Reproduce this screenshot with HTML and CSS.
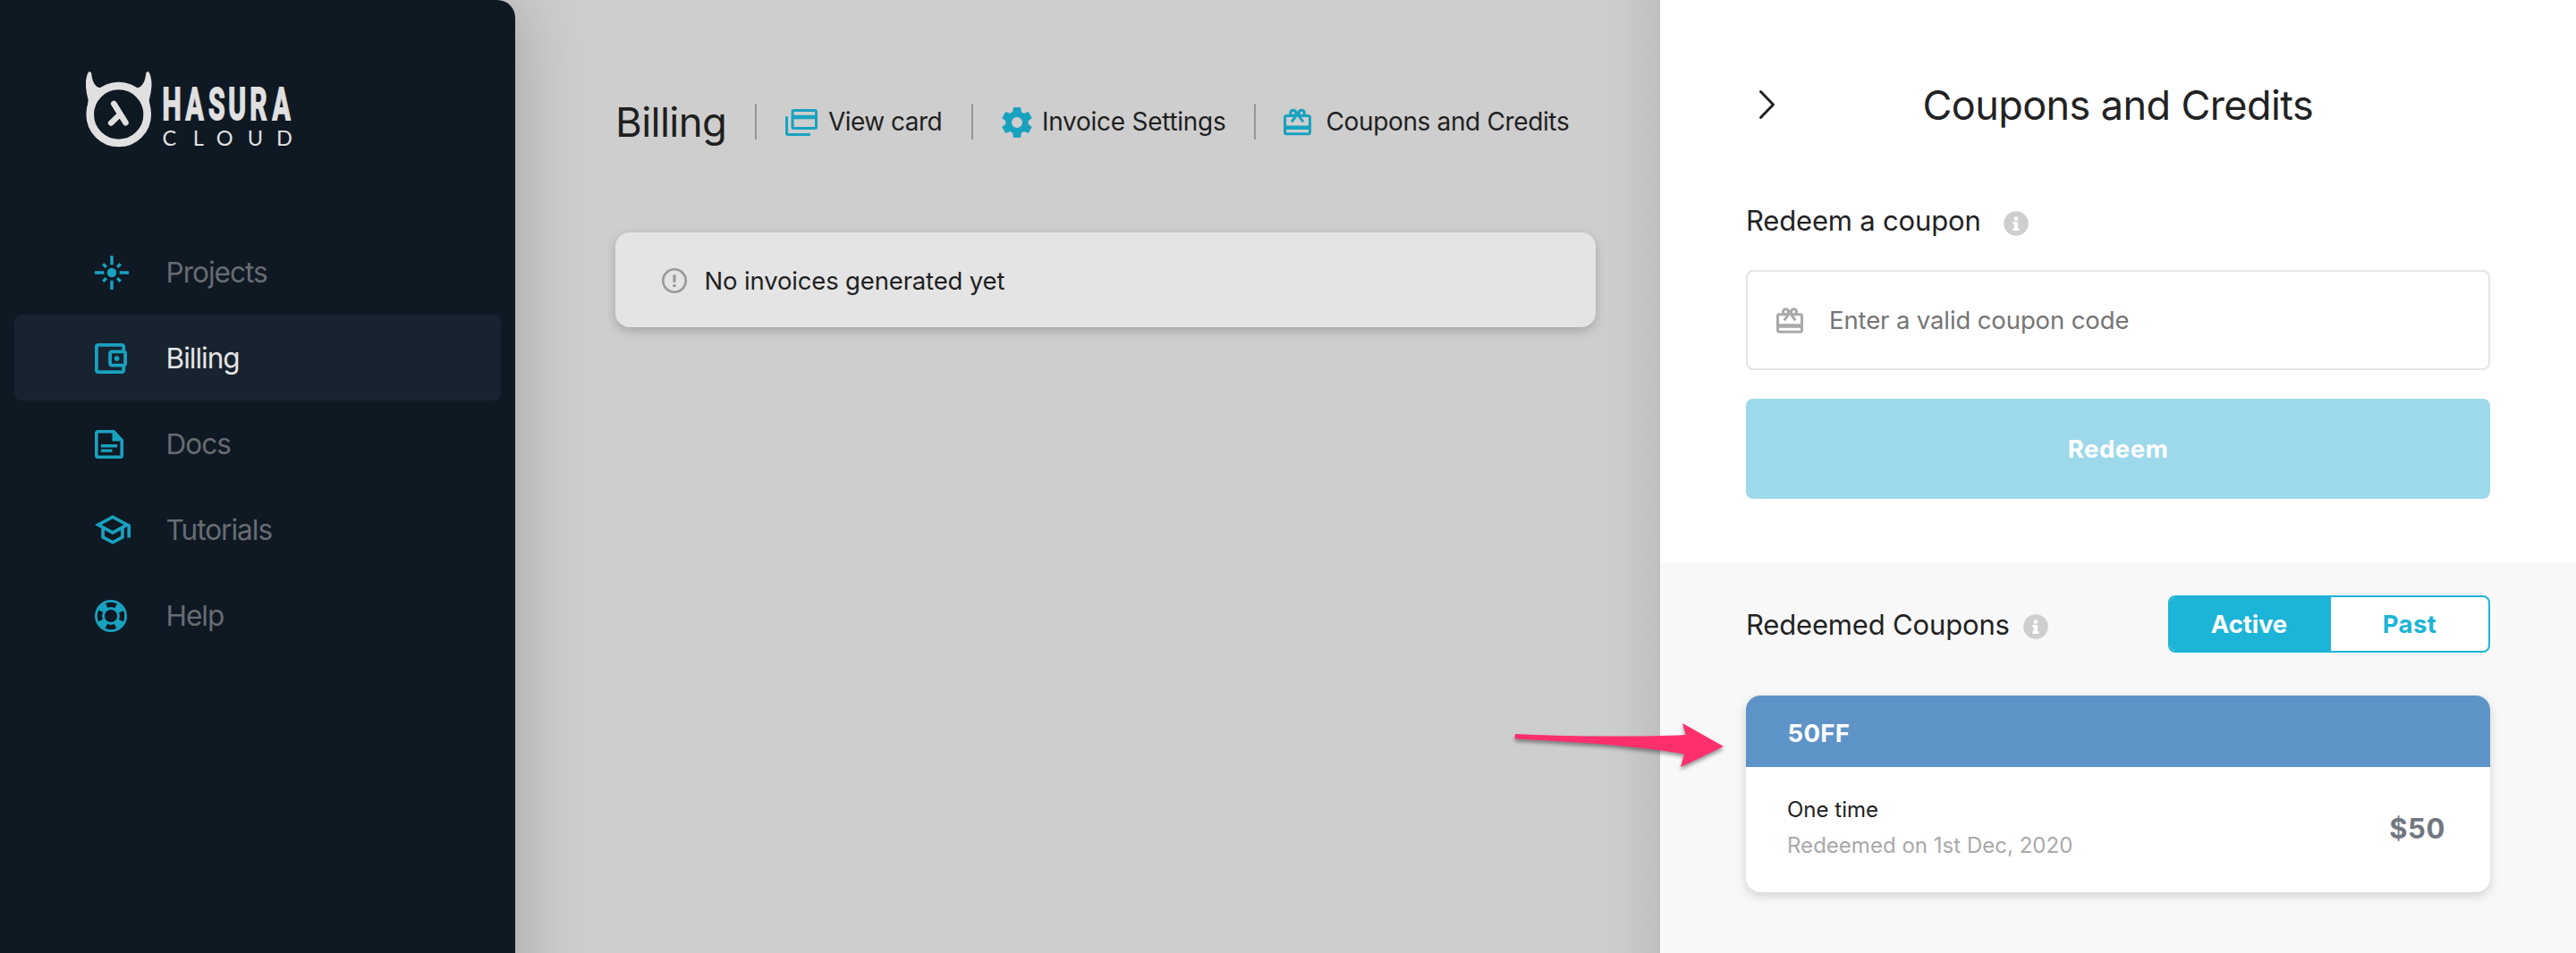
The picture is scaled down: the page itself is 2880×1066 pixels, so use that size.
FILE: index.html
```
<!DOCTYPE html>
<html lang="en">
<head>
<meta charset="utf-8">
<title>Hasura Cloud - Billing</title>
<link rel="stylesheet" href="styles.css">
</head>
<body>
<svg class="defs" aria-hidden="true">
  <symbol id="gift" viewBox="2 2 20 19"><path d="M20 6h-2.18c.11-.31.18-.65.18-1 0-1.66-1.34-3-3-3-1.05 0-1.96.54-2.5 1.35l-.5.67-.5-.68C10.96 2.54 10.05 2 9 2 7.34 2 6 3.34 6 5c0 .35.07.69.18 1H4c-1.11 0-1.99.89-1.99 2L2 19c0 1.11.89 2 2 2h16c1.11 0 2-.89 2-2V8c0-1.11-.89-2-2-2zm-5-2c.55 0 1 .45 1 1s-.45 1-1 1-1-.45-1-1 .45-1 1-1zM9 4c.55 0 1 .45 1 1s-.45 1-1 1-1-.45-1-1 .45-1 1-1zm11 15H4v-2h16v2zm0-5H4V8h5.08L7 10.83 8.62 12 11 8.76l1-1.36 1 1.36L15.38 12 17 10.83 14.92 8H20v6z"/></symbol>
  <symbol id="info" viewBox="0 0 28 28"><circle cx="14" cy="14" r="13.8"/><path class="info-mark" d="M11.8 6.6h4.1v3.8h-4.1zM10.3 12h5.7v7.3h1.5v2.6h-7.2v-2.6h1.5v-4.700h-1.500z"/></symbol>
</svg>
<div class="app">
  <aside class="sidebar">
    <div class="logo">
      <svg width="240" height="88" viewBox="0 0 240 88">
        <circle cx="36.700" cy="48" r="32" fill="none" stroke="currentColor" stroke-width="8.700"/>
        <path d="M4 0C1 1-1 13 .2 19C.8 25 1.800 28 2.700 32L1.500 40L10 30L20 17C17 18.500 14.500 18.500 12.500 17C8 13.500 7 8 6.300 3C6 .8 5 0 4 0z"/>
        <path d="M69.400 0C72.400 1 74.400 13 73.200 19C72.600 25 71.600 28 70.700 32L71.900 40L63.400 30L53.400 17C56.400 18.500 58.900 18.500 60.900 17C65.400 13.500 66.400 8 67.100 3C67.400 .8 68.400 0 69.400 0z"/>
        <path d="M31.300 36L44.500 57.300M37.500 48.500L28.200 57.500" fill="none" stroke="currentColor" stroke-width="6.600" stroke-linecap="round"/>
        <text class="logo-name" transform="scale(.6 1)" x="142.500 186 228.500 265.500 305.500 347.500" y="54">HASURA</text>
        <text class="logo-sub" x="85.500 119.800 145.700 180.800 213" y="83">CLOUD</text>
      </svg>
    </div>
    <nav class="nav">
      <a class="nav-item"><span class="nav-icon"><svg width="38" height="38" viewBox="1 1 22 22"><path d="M7 11H1v2h6v-2zm2.170-3.240L7.050 5.640 5.640 7.050l2.120 2.120 1.410-1.410zM13 1h-2v6h2V1zm5.360 6.050l-1.410-1.410-2.120 2.120 1.410 1.410 2.120-2.120zM17 11v2h6v-2h-6zm-5-2c-1.660 0-3 1.340-3 3s1.340 3 3 3 3-1.340 3-3-1.340-3-3-3zm2.830 7.240l2.120 2.120 1.410-1.410-2.120-2.120-1.410 1.410zm-9.190.71l1.410 1.410 2.120-2.120-1.410-1.410-2.120 2.120zM11 23h2v-6h-2v6z"/></svg></span><span class="nav-text">Projects</span></a>
      <a class="nav-item active"><span class="nav-icon"><svg width="36" height="34" viewBox="3 3 19 18" preserveAspectRatio="none"><path d="M21 7.280V5c0-1.100-.9-2-2-2H5c-1.110 0-2 .9-2 2v14c0 1.100.89 2 2 2h14c1.100 0 2-.9 2-2v-2.280c.59-.35 1-.98 1-1.720V9c0-.74-.41-1.370-1-1.720zM20 9v6h-7V9h7zM5 19V5h14v2h-6c-1.100 0-2 .9-2 2v6c0 1.100.9 2 2 2h6v2H5z"/><circle cx="16" cy="12" r="1.500"/></svg></span><span class="nav-text">Billing</span></a>
      <a class="nav-item"><span class="nav-icon"><svg width="32" height="32" viewBox="0 0 32 32"><path fill-rule="evenodd" d="M3.500 0H22L32 11V28.500A3.500 3.500 0 0 1 28.500 32H3.500A3.500 3.500 0 0 1 0 28.500V3.500A3.500 3.500 0 0 1 3.500 0zM3.600 3.400V28.600H28.400V12.400H19.500V3.400zM7 16H25v3.400H7zM7 21.400H19.500v3.400H7z"/></svg></span><span class="nav-text">Docs</span></a>
      <a class="nav-item"><span class="nav-icon"><svg width="40" height="33" viewBox="1 3 22 18"><path d="M12 3L1 9l4 2.180v6L12 21l7-3.820v-6l2-1.090V17h2V9L12 3zm6.820 6L12 12.720 5.180 9 12 5.280 18.820 9zM17 15.990l-5 2.730-5-2.730v-3.720L12 15l5-2.730v3.720z"/></svg></span><span class="nav-text">Tutorials</span></a>
      <a class="nav-item"><span class="nav-icon"><svg class="ring" width="36" height="36" viewBox="0 0 36 36"><circle cx="18" cy="18" r="16.600" stroke-width="2.800"/><circle cx="18" cy="18" r="8.500" stroke-width="2.800"/><circle cx="18" cy="18" r="12.500" stroke-width="6.400" stroke-dasharray="9 10.635" stroke-dashoffset="-5.320"/></svg></span><span class="nav-text">Help</span></a>
    </nav>
  </aside>

  <main class="main">
    <header class="toolbar">
      <h1 class="title">Billing</h1>
      <a class="tool view"><svg width="36" height="30" viewBox="0 0 36 30"><path fill-rule="evenodd" d="M9.500 0H33A3 3 0 0 1 36 3V20A3 3 0 0 1 33 23H9.500A3 3 0 0 1 6.500 20V3A3 3 0 0 1 9.500 0zM9.600 3V6.800H33V3zM9.600 11.200V20H33V11.200zM0 8.200H3.100V27H28V30H3A3 3 0 0 1 0 27z"/></svg><span>View card</span></a>
      <a class="tool invoice"><svg width="34" height="34" viewBox="2 2 20 20"><path d="M19.430 12.980c.04-.32.070-.64.070-.98s-.03-.66-.070-.98l2.110-1.650c.19-.15.240-.42.120-.64l-2-3.460c-.12-.22-.39-.3-.61-.22l-2.490 1c-.52-.4-1.080-.73-1.690-.98l-.38-2.650C14.460 2.180 14.250 2 14 2h-4c-.25 0-.46.180-.49.420l-.38 2.650c-.61.250-1.170.59-1.690.98l-2.490-1c-.23-.09-.49 0-.61.220l-2 3.460c-.13.220-.070.490.120.640l2.110 1.650c-.04.320-.070.650-.070.980s.03.660.070.980l-2.110 1.650c-.19.150-.24.420-.12.640l2 3.460c.12.220.39.300.61.220l2.490-1c.52.400 1.080.730 1.690.980l.38 2.650c.03.240.24.420.49.420h4c.25 0 .46-.18.490-.42l.38-2.650c.61-.25 1.170-.59 1.690-.98l2.490 1c.23.090.49 0 .61-.22l2-3.460c.12-.22.070-.49-.12-.64l-2.110-1.650zM12 15.500c-1.930 0-3.500-1.570-3.500-3.500s1.570-3.500 3.500-3.500 3.500 1.570 3.500 3.500-1.570 3.500-3.500 3.500z"/></svg><span>Invoice Settings</span></a>
      <a class="tool coupons"><svg width="31" height="31"><use href="#gift"/></svg><span>Coupons and Credits</span></a>
    </header>
    <section class="empty">
      <svg width="28" height="28" viewBox="0 0 28 28"><circle cx="14" cy="14" r="12.700" fill="none" stroke="currentColor" stroke-width="2.600"/><path d="M12.400 7.200h3.200v8.600h-3.200zM12.400 18h3.200v3h-3.200z"/></svg>
      <span>No invoices generated yet</span>
    </section>
  </main>

  <aside class="panel">
    <section class="redeem">
      <header class="panel-head">
        <svg class="chevron" width="20" height="34" viewBox="0 0 20 34"><path d="M2.500 2.500L16.500 17L2.500 31.500"/></svg>
        <h2 class="panel-title">Coupons and Credits</h2>
      </header>
      <div class="label label-redeem"><span>Redeem a coupon</span><svg width="28" height="28"><use href="#info"/></svg></div>
      <div class="field"><svg width="30" height="29"><use href="#gift"/></svg><span>Enter a valid coupon code</span></div>
      <button class="submit">Redeem</button>
    </section>
    <section class="redeemed">
      <div class="redeemed-head">
        <div class="label label-list"><span>Redeemed Coupons</span><svg width="28" height="28"><use href="#info"/></svg></div>
        <div class="toggle"><span class="on">Active</span><span class="off">Past</span></div>
      </div>
      <article class="coupon">
        <div class="coupon-code">50FF</div>
        <div class="coupon-body">
          <div><div class="kind">One time</div><div class="date">Redeemed on 1st Dec, 2020</div></div>
          <div class="amount">$50</div>
        </div>
      </article>
    </section>
  </aside>
  <svg class="arrow" width="240" height="54" viewBox="0 0 240 54"><path d="M2.500 13C60 16 140 16.500 192.600 14L189 1L235 27L187 50L191 35.500C140 26 60 21.500 2.500 18.500Q.2 15.500 2.500 13z"/></svg>
</div>
</body>
</html>
```
FILE: styles.css
```
* { box-sizing: border-box; }
body { margin: 0; font-family: Inter, "Liberation Sans", sans-serif; color: #1f1f1f; background: #cecece; }
h1, h2 { margin: 0; font-weight: 400; }
svg { display: block; flex: none; fill: currentColor; }
.defs { position: absolute; width: 0; height: 0; }
.app { position: relative; display: flex; width: 2880px; height: 1066px; overflow: hidden; }

/* Sidebar */
.sidebar { width: 576px; flex: none; margin-bottom: -100px; background: #0f1924; border-top-right-radius: 20px; box-shadow: 0 0 80px rgba(0, 0, 0, .23); }
.logo { height: 256px; padding: 80px 0 0 96px; color: #e0e0e0; }
.logo-name { font: 700 50px Roboto, sans-serif; stroke: currentColor; stroke-width: 1.800px; }
.logo-sub { font: 400 23.500px Lato, sans-serif; }
.nav { padding: 0 16px; }
.nav-item { display: flex; align-items: center; height: 96px; padding-left: 90px; border-radius: 8px; color: #676c73; font-size: 31.500px; letter-spacing: -.98px; }
.nav-item.active { background: #182330; color: #e4e4e4; }
.nav-icon { width: 79.500px; padding-top: 1px; color: #19a2c0; }
.ring { fill: none; stroke: currentColor; }
.nav-text { line-height: 40px; padding-top: 1px; }

/* Billing page */
.main { flex: 1; padding: 108px 72px 0 112px; }
.toolbar { display: flex; align-items: center; height: 56px; white-space: nowrap; }
.title { width: 156px; font-size: 45.500px; line-height: 56px; letter-spacing: -.62px; padding-top: 1px; }
.tool { display: flex; align-items: center; height: 40px; border-left: 2px solid #959595; font-size: 28px; line-height: 40px; }
.tool svg { color: #19a2c0; }
.view { width: 242px; padding-left: 32px; gap: 12px; letter-spacing: -.53px; }
.view svg { margin-top: 2px; }
.invoice { width: 316px; padding-left: 32px; gap: 11px; letter-spacing: -.27px; }
.invoice svg { margin-top: 2px; }
.coupons { padding-left: 31px; gap: 16.500px; letter-spacing: -.36px; }
.empty { display: flex; align-items: center; gap: 19.500px; height: 106px; margin-top: 96px; padding-left: 52px; border-radius: 16px; background: #e4e4e4; box-shadow: 0 4px 12px rgba(0, 0, 0, .2); font-size: 27.500px; letter-spacing: -.16px; }
.empty svg { color: #999; margin-top: 2px; }
.empty span { line-height: 36px; padding-top: 1px; }

/* Coupons panel */
.panel { position: relative; display: flex; flex-direction: column; flex: none; width: 1024px; background: #f8f8f8; color: #222; }
.panel::before { content: ""; position: absolute; top: 0; bottom: 0; right: 100%; width: 64px; background: linear-gradient(to left, rgba(0, 0, 0, .075), rgba(0, 0, 0, .045) 35%, rgba(0, 0, 0, .015) 65%, transparent); }
.redeem { height: 630px; padding: 90px 96px 0; background: #fff; }
.panel-head { display: flex; align-items: center; height: 56px; padding-left: 14px; }
.chevron { margin-top: -2px; }
.chevron path { fill: none; stroke: #222; stroke-width: 3; stroke-linecap: round; stroke-linejoin: round; }
.panel-title { padding-left: 163.500px; font-size: 45px; line-height: 56px; letter-spacing: -.59px; }
.label { display: flex; align-items: center; font-size: 31px; line-height: 40px; }
.label svg { color: #cecece; margin-top: 5px; }
.info-mark { fill: #fff; }
.label-redeem { margin-top: 81px; gap: 25.500px; letter-spacing: -.18px; }
.field { display: flex; align-items: center; gap: 29px; height: 112px; margin-top: 35px; padding-left: 32px; border: 2px solid #e5e5e5; border-radius: 8px; color: #757575; font-size: 27.500px; letter-spacing: -.12px; }
.field svg { color: #a9a9a9; }
.submit { display: block; width: 100%; height: 112px; margin-top: 32px; padding: 0; border: 0; border-radius: 8px; background: #9ed9eb; color: #fff; font: 700 27.500px Inter, sans-serif; letter-spacing: .56px; }
.redeemed { flex: 1; padding: 36px 96px 0; }
.redeemed-head { display: flex; justify-content: space-between; align-items: center; height: 64px; }
.label-list { gap: 15px; letter-spacing: -.17px; padding-top: 1px; }
.toggle { display: flex; width: 360px; height: 64px; border: 2px solid #1cb4d7; border-radius: 8px; overflow: hidden; background: #fff; font-size: 27.500px; font-weight: 700; line-height: 61px; text-align: center; }
.on { width: 180px; padding-right: 3px; background: #1cb4d7; color: #fff; letter-spacing: -.12px; }
.off { flex: 1; color: #1cb4d7; letter-spacing: .4px; }
.coupon { height: 220px; margin-top: 48px; border-radius: 16px; overflow: hidden; background: #fff; box-shadow: 0 4px 12px rgba(0, 0, 0, .16); }
.coupon-code { height: 80px; padding: 1px 0 0 46.500px; background: #5e93c7; color: #fff; font-size: 27.500px; font-weight: 700; line-height: 82px; letter-spacing: .3px; }
.coupon-body { display: flex; justify-content: space-between; padding: 28px 50px 0 46px; }
.kind, .date { font-size: 24px; line-height: 40px; letter-spacing: .02px; }
.date { color: #a9a9a9; }
.amount { color: #717780; font-size: 31px; font-weight: 700; line-height: 82px; letter-spacing: .6px; }

/* Pointer drawn over the page */
.arrow { position: absolute; left: 1692px; top: 808px; overflow: visible; color: #ff2f6e; filter: drop-shadow(0 3px 2px rgba(0, 0, 0, .4)); }
```
